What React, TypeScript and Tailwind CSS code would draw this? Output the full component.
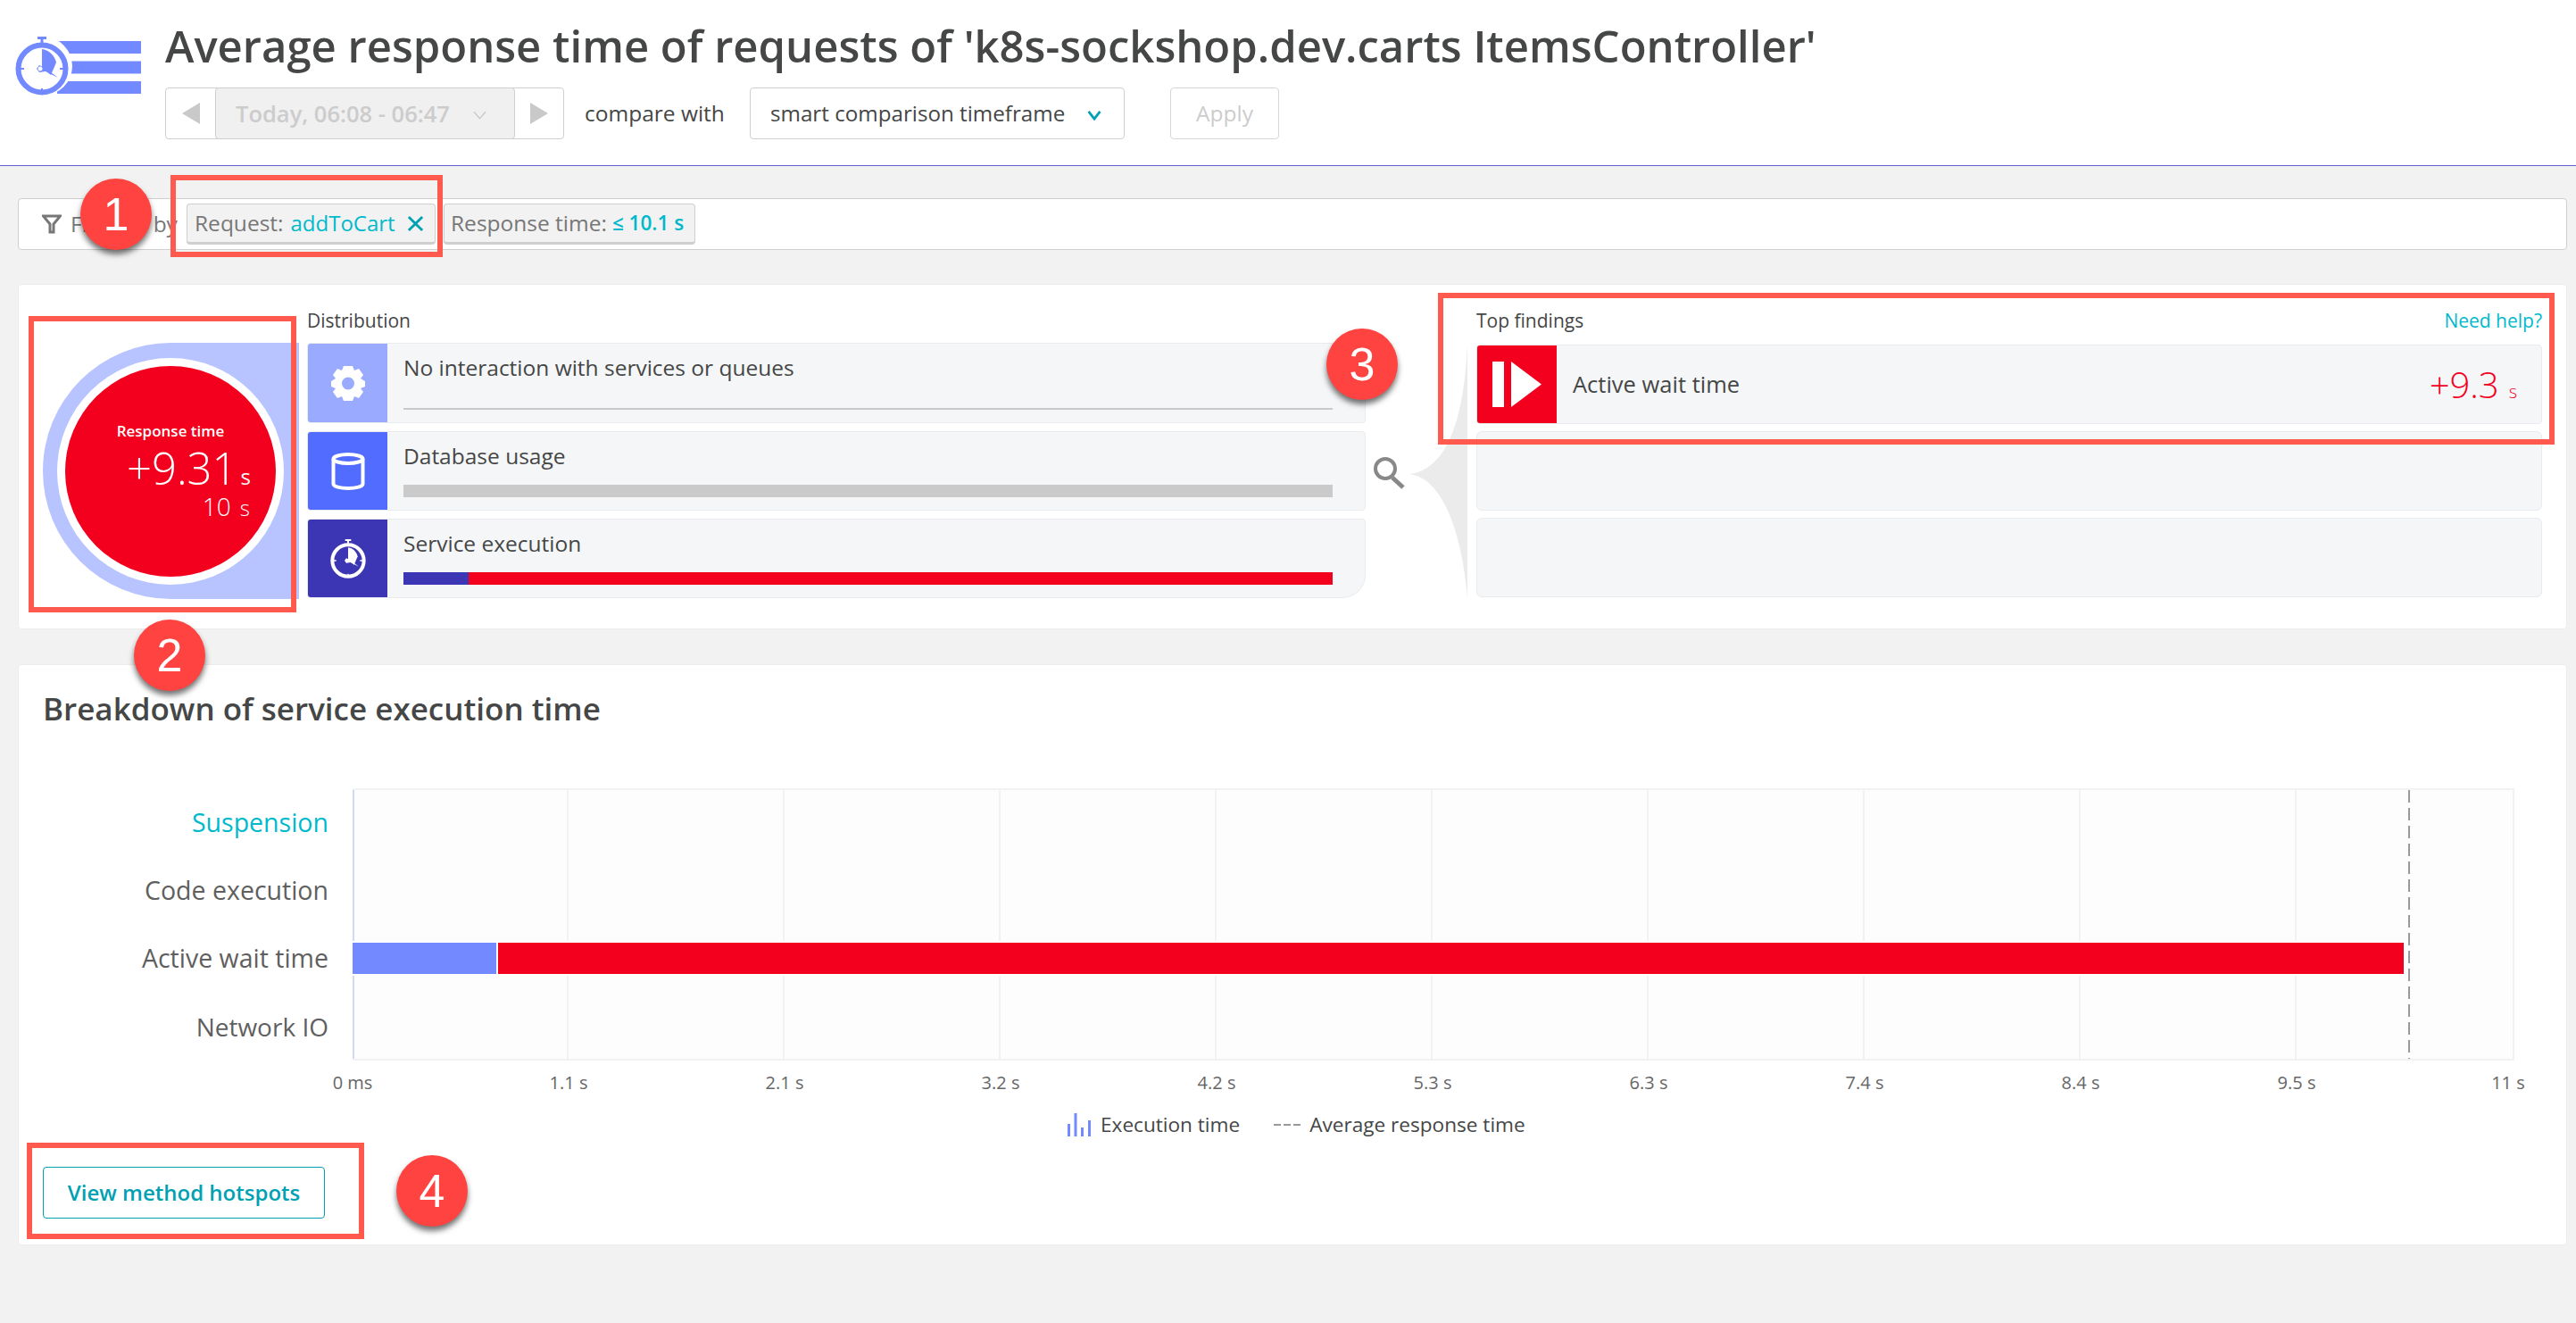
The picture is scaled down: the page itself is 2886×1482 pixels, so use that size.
import React from 'react';

const ticks = ['0 ms', '1.1 s', '2.1 s', '3.2 s', '4.2 s', '5.3 s', '6.3 s', '7.4 s', '8.4 s', '9.5 s', '11 s'];

// Stopwatch drawn on a 60x66 box, colour comes from currentColor
const Stopwatch: React.FC<{ className?: string }> = ({ className }) => (
  <svg viewBox="0 0 60 66" className={className} fill="none">
    <rect x="25" y="0" width="10" height="3" fill="currentColor" />
    <rect x="28.5" y="2" width="3" height="5" fill="currentColor" />
    <circle cx="30" cy="36" r="26.5" stroke="currentColor" strokeWidth="6" />
    <path d="M30 14 C38 15 44 21 46 29 L40 43 L30 35 Z" fill="currentColor" />
    <path d="M27 32 L24 36 L27 40 L34 39 L48 46 L35 36 Z" fill="currentColor" />
    <circle cx="28" cy="36" r="2.5" fill="#fff" />
    <path d="M30 58 V63 M30 9 V12 M6 36 H10 M50 36 H54" stroke="currentColor" strokeWidth="2" />
  </svg>
);

const Gear = () => (
  <svg viewBox="0 0 40 40" className="w-[40px] h-[40px]">
    <path
      fill="#fff"
      fillRule="evenodd"
      d="M15 1 L25 1 L27 6 L32 4 L37 11 L34 15 L39 18 L39 24 L34 26 L37 30 L32 37 L27 35 L25 40 L15 40 L13 35 L8 37 L3 30 L6 26 L1 24 L1 18 L6 15 L3 11 L8 4 L13 6 Z M20 13.5 A7 7 0 1 0 20 27.5 A7 7 0 1 0 20 13.5 Z"
    />
  </svg>
);

const Database = () => (
  <svg viewBox="0 0 38 42" className="w-[38px] h-[42px]" fill="none" stroke="#fff" strokeWidth="4">
    <ellipse cx="19" cy="7" rx="16.5" ry="5" />
    <path d="M2.5 7 V35 C2.5 38 10 40 19 40 C28 40 35.5 38 35.5 35 V7" />
  </svg>
);

const ActiveWait = () => (
  <svg viewBox="0 0 55 51" className="w-[55px] h-[51px]" fill="#fff">
    <rect x="0" y="0" width="13" height="51" />
    <path d="M21 0 L55 25.5 L21 51 Z" />
  </svg>
);

const Row: React.FC<{ color: string; h: string; icon: React.ReactNode; label: string; children: React.ReactNode; corner?: string }> = ({
  color,
  h,
  icon,
  label,
  children,
  corner,
}) => (
  <div className={`flex ${h} bg-[#f5f6f8] border border-[#e9ebee] rounded-sm ${corner || ''} overflow-hidden`}>
    <div className={`w-[89px] shrink-0 flex items-center justify-center ${color}`}>{icon}</div>
    <div className="flex-1 flex flex-col justify-between pl-[18px] pr-[36px] pt-[9px] pb-[14px]">
      <span className="text-[24.5px] leading-[36px] text-[#454646]">{label}</span>
      {children}
    </div>
  </div>
);

const Badge: React.FC<{ className: string; n: number }> = ({ className, n }) => (
  <div
    className={`absolute w-[80px] h-[80px] rounded-full bg-[#ff4340] text-white flex items-center justify-center text-[52px] shadow-[0_5px_6px_rgba(0,0,0,0.55)] font-['Liberation_Sans',sans-serif] ${className}`}
  >
    {n}
  </div>
);

const App: React.FC = () => {
  return (
    <div className="relative w-[2886px] h-[1482px] overflow-hidden bg-[#f2f2f2] font-['Open_Sans',sans-serif] text-[#454646]">
      {/* Header */}
      <div className="h-[186px] bg-white border-b border-[#5a62d6] flex">
        <div className="relative w-[185px] shrink-0">
          <svg viewBox="0 0 160 90" className="absolute left-[10px] top-[30px] w-[160px] h-[90px] text-[#7289ff]">
            <rect x="54" y="16" width="94" height="14" fill="currentColor" />
            <rect x="54" y="38.5" width="94" height="14" fill="currentColor" />
            <rect x="54" y="61" width="94" height="14" fill="currentColor" />
            <circle cx="38" cy="44" r="33" fill="#fff" />
          </svg>
          <Stopwatch className="absolute left-[17px] top-[41px] w-[60px] h-[66px] text-[#7289ff]" />
        </div>
        <div className="flex flex-col pt-[20px]">
          <h1 className="text-[49px] leading-[62px] font-semibold whitespace-nowrap">
            Average response time of requests of 'k8s-sockshop.dev.carts ItemsController'
          </h1>
          <div className="flex items-center mt-[16px] h-[58px]">
            <div className="flex w-[447px] h-[58px] border border-[#cfcfcf] rounded-[4px]">
              <div className="w-[55px] flex items-center justify-center">
                <div className="w-0 h-0 border-y-[12px] border-y-transparent border-r-[20px] border-r-[#c9c9c9]" />
              </div>
              <div className="w-[336px] bg-[#f0f0f0] border border-[#cfcfcf] rounded-[4px] flex items-center pl-[22px] -my-px">
                <span className="text-[25.5px] font-semibold text-[#cccccc] whitespace-nowrap">Today, 06:08 - 06:47</span>
                <svg viewBox="0 0 16 10" className="w-[15px] h-[10px] ml-[26px] mt-[4px]" fill="none" stroke="#c9c9c9" strokeWidth="1.5">
                  <path d="M1 1 L8 9 L15 1" />
                </svg>
              </div>
              <div className="flex-1 flex items-center justify-center">
                <div className="w-0 h-0 border-y-[12px] border-y-transparent border-l-[20px] border-l-[#c9c9c9]" />
              </div>
            </div>
            <span className="ml-[23px] w-[157px] text-[24.5px] whitespace-nowrap">compare with</span>
            <div className="ml-[28px] w-[420px] h-[58px] border border-[#cfcfcf] rounded-[4px] flex items-center pl-[22px]">
              <span className="text-[24.2px] whitespace-nowrap">smart comparison timeframe</span>
              <svg viewBox="0 0 16 12" className="w-[16px] h-[11px] ml-[25px] mt-[4px]" fill="none" stroke="#00a1b2" strokeWidth="3">
                <path d="M1 1 L8 10 L15 1" />
              </svg>
            </div>
            <div className="ml-[51px] w-[122px] h-[58px] border border-[#d6d6d6] rounded-[4px] flex items-center justify-center text-[24.5px] text-[#cccccc]">
              Apply
            </div>
          </div>
        </div>
      </div>

      {/* Filter bar */}
      <div className="mt-[36px] ml-[20px] mr-[10px] h-[58px] bg-white border border-[#cfcfcf] rounded-[4px] flex items-center pl-[26px]">
        <svg viewBox="0 0 22 22" className="w-[22px] h-[22px]" fill="none" stroke="#777" strokeWidth="3">
          <path d="M1.5 2 H20.5 L13 11 V20 H9 V11 Z" />
        </svg>
        <span className="ml-[10px] w-[130px] text-[24.5px] text-[#777] whitespace-nowrap">Filtered by</span>
        <div className="h-[46px] w-[279px] bg-[#f2f2f2] border border-[#cfcfcf] border-b-[3px] rounded-[4px] flex items-center pl-[8px] text-[24.5px] whitespace-nowrap">
          <span className="text-[#777]">Request:</span>
          <span className="ml-[8px] text-[24px] text-[#00b9cc] font-medium">addToCart</span>
          <svg viewBox="0 0 20 20" className="ml-[13px] w-[19px] h-[19px]" fill="none" stroke="#00a1b2" strokeWidth="3">
            <path d="M2 2 L18 18 M18 2 L2 18" />
          </svg>
        </div>
        <div className="ml-[9px] h-[46px] w-[282px] bg-[#f2f2f2] border border-[#cfcfcf] border-b-[3px] rounded-[4px] flex items-center pl-[7px] text-[24.5px] whitespace-nowrap">
          <span className="text-[#777]">Response time:</span>
          <span className="ml-[6px] text-[22.5px] text-[#00b9cc] font-semibold">≤ 10.1 s</span>
        </div>
      </div>

      {/* Distribution and findings */}
      <div className="mt-[38px] ml-[20px] mr-[10px] h-[387px] bg-white border border-[#ececec] rounded-[4px] flex pl-[27px]">
        <div className="pt-[65px] w-[296px] shrink-0">
          <div className="w-[287px] h-[287px] rounded-l-full bg-[#b7c4ff] flex items-center pl-[16px]">
            <div className="w-[254px] h-[254px] rounded-full bg-white p-[9px]">
              <div className="w-full h-full rounded-full bg-[#f2001d] text-white flex flex-col pt-[60px]">
                <span className="text-[17px] leading-[26px] font-semibold text-center">Response time</span>
                <div className="flex items-baseline justify-end pr-[28px] mt-[6px] leading-[44px]">
                  <span className="text-[49px] font-light">+9.31</span>
                  <span className="text-[24px] ml-[4px]">s</span>
                </div>
                <div className="flex items-baseline justify-end pr-[29px] leading-[22px]">
                  <span className="text-[28px] font-light">10</span>
                  <span className="text-[24px] ml-[10px] font-light">s</span>
                </div>
              </div>
            </div>
          </div>
        </div>

        <div className="w-[1186px] shrink-0 pt-[26px]">
          <div className="h-[39px] text-[21px] leading-[28px]">Distribution</div>
          <div className="flex flex-col gap-[9px]">
            <Row color="bg-[#9aabff]" h="h-[90px]" icon={<Gear />} label="No interaction with services or queues">
              <div className="h-[2px] bg-[#c9c9c9]" />
            </Row>
            <Row color="bg-[#526cff]" h="h-[89px]" icon={<Database />} label="Database usage">
              <div className="h-[14px] bg-[#cacaca]" />
            </Row>
            <Row color="bg-[#3d36b4]" h="h-[89px]" corner="rounded-br-[26px]" icon={<Stopwatch className="w-[40px] h-[44px] text-white" />} label="Service execution">
              <div className="h-[14px] flex">
                <div className="w-[73px] bg-[#3d36b4]" />
                <div className="flex-1 bg-[#f2001d]" />
              </div>
            </Row>
          </div>
        </div>

        {/* Magnifier and funnel between the two columns */}
        <div className="w-[124px] shrink-0 pt-[65px]">
          <svg viewBox="0 0 124 287" className="w-[124px] h-[287px]">
            <path d="M114 0 C110 100 85 143 49 147 C85 151 108 210 114 286 Z" fill="#ebebeb" />
            <circle cx="22" cy="141" r="11" fill="none" stroke="#888" strokeWidth="4" />
            <path d="M30 151 L42 162" stroke="#888" strokeWidth="5" />
          </svg>
        </div>

        <div className="w-[1194px] shrink-0 pt-[26px]">
          <div className="h-[41px] flex justify-between text-[21px] leading-[28px]">
            <span>Top findings</span>
            <span className="text-[#00b9cc]">Need help?</span>
          </div>
          <div className="flex flex-col gap-[8px]">
            <div className="h-[89px] flex bg-[#f5f6f8] border border-[#e9ebee] rounded-[4px] overflow-hidden">
              <div className="w-[89px] shrink-0 bg-[#f2001d] flex items-center justify-center">
                <ActiveWait />
              </div>
              <div className="flex-1 flex items-center justify-between pl-[18px] pr-[27px]">
                <span className="text-[25.5px]">Active wait time</span>
                <div className="flex items-baseline text-[#f2001d]">
                  <span className="text-[40px] font-light">+9.3</span>
                  <span className="text-[20px] ml-[11px] font-light">s</span>
                </div>
              </div>
            </div>
            <div className="h-[89px] bg-[#f5f6f8] border border-[#e9ebee] rounded-[6px]" />
            <div className="h-[89px] bg-[#f5f6f8] border border-[#e9ebee] rounded-[6px]" />
          </div>
        </div>
      </div>

      {/* Breakdown */}
      <div className="mt-[39px] ml-[20px] mr-[10px] h-[651px] bg-white border border-[#ececec] rounded-[4px] pl-[27px] pt-[26px]">
        <h2 className="text-[35px] leading-[46px] font-semibold">Breakdown of service execution time</h2>

        <div className="flex mt-[66px] -ml-[27px]">
          <div className="w-[347px] h-[305px] grid grid-rows-4 text-[28.5px] text-right text-[#5f5f5f]">
            <div className="flex items-center justify-end font-medium text-[#00b9cc]">Suspension</div>
            <div className="flex items-center justify-end">Code execution</div>
            <div className="flex items-center justify-end">Active wait time</div>
            <div className="flex items-center justify-end text-[28px]">Network IO</div>
          </div>
          <div className="relative ml-[27px] w-[2422px] h-[305px] bg-[#fdfdfd] border-t-2 border-b-2 border-r-2 border-[#f1f2f4]">
            <div className="absolute inset-0 flex">
              {ticks.slice(1).map((t) => (
                <div key={t} className="w-[242px] shrink-0 border-r-2 border-[#f1f2f4] last:border-r-0" />
              ))}
            </div>
            <div className="absolute left-0 top-0 bottom-0 w-[2px] bg-[#cfdaf6]" />
            <div className="relative h-full grid grid-rows-4">
              <div />
              <div />
              <div className="flex items-center">
                <div className="flex h-[39px] py-[2px] bg-white pr-[2px]">
                  <div className="w-[161px] bg-[#7289ff]" />
                  <div className="w-[2135px] ml-[2px] bg-[#f2001d]" />
                </div>
              </div>
              <div />
            </div>
            <svg className="absolute left-[2303px] top-0 w-[2px] h-[301px]" viewBox="0 0 2 301">
              <line x1="1" y1="0" x2="1" y2="301" stroke="#999" strokeWidth="2" strokeDasharray="14 6" />
            </svg>
          </div>
        </div>

        {/* Axis labels */}
        <div className="flex -ml-[27px] pl-[253px] mt-[11px] text-[20px] leading-[28px] text-[#666]">
          {ticks.map((t) => (
            <div key={t} className="w-[242px] shrink-0 text-center last:-translate-x-[5px]">
              {t}
            </div>
          ))}
        </div>

        {/* Legend */}
        <div className="flex items-center -ml-[27px] pl-[1175px] mt-[18px] text-[22.6px] leading-[30px] text-[#454646]">
          <svg viewBox="0 0 26 26" className="w-[26px] h-[26px]" fill="#7289ff">
            <rect x="0" y="12" width="3" height="14" />
            <rect x="7.5" y="0" width="3" height="26" />
            <rect x="15" y="16" width="3" height="10" />
            <rect x="23" y="8" width="3" height="18" />
          </svg>
          <span className="ml-[11px] whitespace-nowrap">Execution time</span>
          <svg viewBox="0 0 30 2" className="ml-[38px] w-[30px] h-[2px]">
            <line x1="0" y1="1" x2="30" y2="1" stroke="#999" strokeWidth="2" strokeDasharray="8 3" />
          </svg>
          <span className="ml-[10px] whitespace-nowrap">Average response time</span>
        </div>

        <button className="block mt-[32px] w-[316px] h-[58px] border border-[#00a1b2] rounded-[4px] text-[24px] font-semibold text-[#00a1b2] bg-white">
          View method hotspots
        </button>
      </div>

      {/* Tutorial annotations painted over the screenshot */}
      <div className="absolute left-[191px] top-[196px] w-[305px] h-[92px] border-[6px] border-[#ff5a4d]" />
      <div className="absolute left-[32px] top-[354px] w-[300px] h-[332px] border-[6px] border-[#ff5a4d]" />
      <div className="absolute left-[1611px] top-[328px] w-[1251px] h-[170px] border-[6px] border-[#ff5a4d]" />
      <div className="absolute left-[30px] top-[1280px] w-[378px] h-[108px] border-[6px] border-[#ff5a4d]" />
      <Badge className="left-[90px] top-[200px]" n={1} />
      <Badge className="left-[150px] top-[694px]" n={2} />
      <Badge className="left-[1486px] top-[368px]" n={3} />
      <Badge className="left-[444px] top-[1294px]" n={4} />
    </div>
  );
};

export default App;
